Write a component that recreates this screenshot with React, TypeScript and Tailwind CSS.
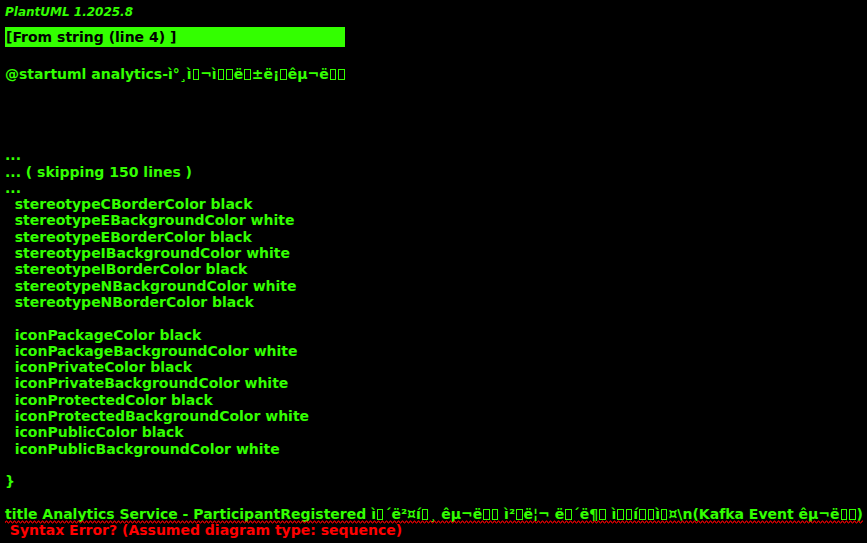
import React from "react";

const B = () => (
  <span className="inline-block w-[6.5px] h-[11px] border border-current align-[-1px] mx-[1px]" />
);

const stereotypes = [
  "stereotypeCBorderColor black",
  "stereotypeEBackgroundColor white",
  "stereotypeEBorderColor black",
  "stereotypeIBackgroundColor white",
  "stereotypeIBorderColor black",
  "stereotypeNBackgroundColor white",
  "stereotypeNBorderColor black",
];

const icons = [
  "iconPackageColor black",
  "iconPackageBackgroundColor white",
  "iconPrivateColor black",
  "iconPrivateBackgroundColor white",
  "iconProtectedColor black",
  "iconProtectedBackgroundColor white",
  "iconPublicColor black",
  "iconPublicBackgroundColor white",
];

// red squiggle drawn under the error line
const Squiggle = () => (
  <svg className="absolute left-0 bottom-[-2px] w-full h-[4px]" preserveAspectRatio="none">
    <defs>
      <pattern id="wave" width="4" height="4" patternUnits="userSpaceOnUse">
        <path d="M0 3 L1 1 L2 1 L3 3 L4 3" fill="none" stroke="#ff0000" strokeWidth="1" />
      </pattern>
    </defs>
    <rect width="100%" height="4" fill="url(#wave)" />
  </svg>
);

export default function App() {
  return (
    <div className="w-[867px] h-[543px] overflow-hidden bg-black text-[#33ff00] font-['DejaVu_Sans',sans-serif] font-bold text-[14px] leading-[16.3px] whitespace-pre px-[5px] pt-[4px]">
      <div className="italic text-[12px] leading-[16px]">PlantUML 1.2025.8</div>
      <div className="mt-[7px] w-[340px] h-[20px] bg-[#33ff00] text-black pl-[1px] leading-[20px]">
        [From string (line 4) ]
      </div>
      <div className="mt-[19px]">
        @startuml analytics-ì°¸ì<B />¬ì<B /><B />ë<B />±ë¡<B />êµ¬ë<B /><B />
      </div>
      <div className="h-[65px]" />
      <div>...</div>
      <div>... ( skipping 150 lines )</div>
      <div>...</div>
      {stereotypes.map((s) => (
        <div key={s}>{"  " + s}</div>
      ))}
      <div> </div>
      {icons.map((s) => (
        <div key={s}>{"  " + s}</div>
      ))}
      <div> </div>
      <div>{"}"}</div>
      <div> </div>
      <div>
        <span className="relative inline-block">
          title Analytics Service - ParticipantRegistered ì<B />´ë²¤í<B />¸ êµ¬ë<B /><B /> ì²<B />ë¦¬ ë<B />´ë¶<B /> ì<B /><B />í<B /><B />ì<B />¤\n(Kafka Event êµ¬ë<B /><B />)
          <Squiggle />
        </span>
      </div>
      <div className="text-[#ff0000]"> Syntax Error? (Assumed diagram type: sequence)</div>
    </div>
  );
}
